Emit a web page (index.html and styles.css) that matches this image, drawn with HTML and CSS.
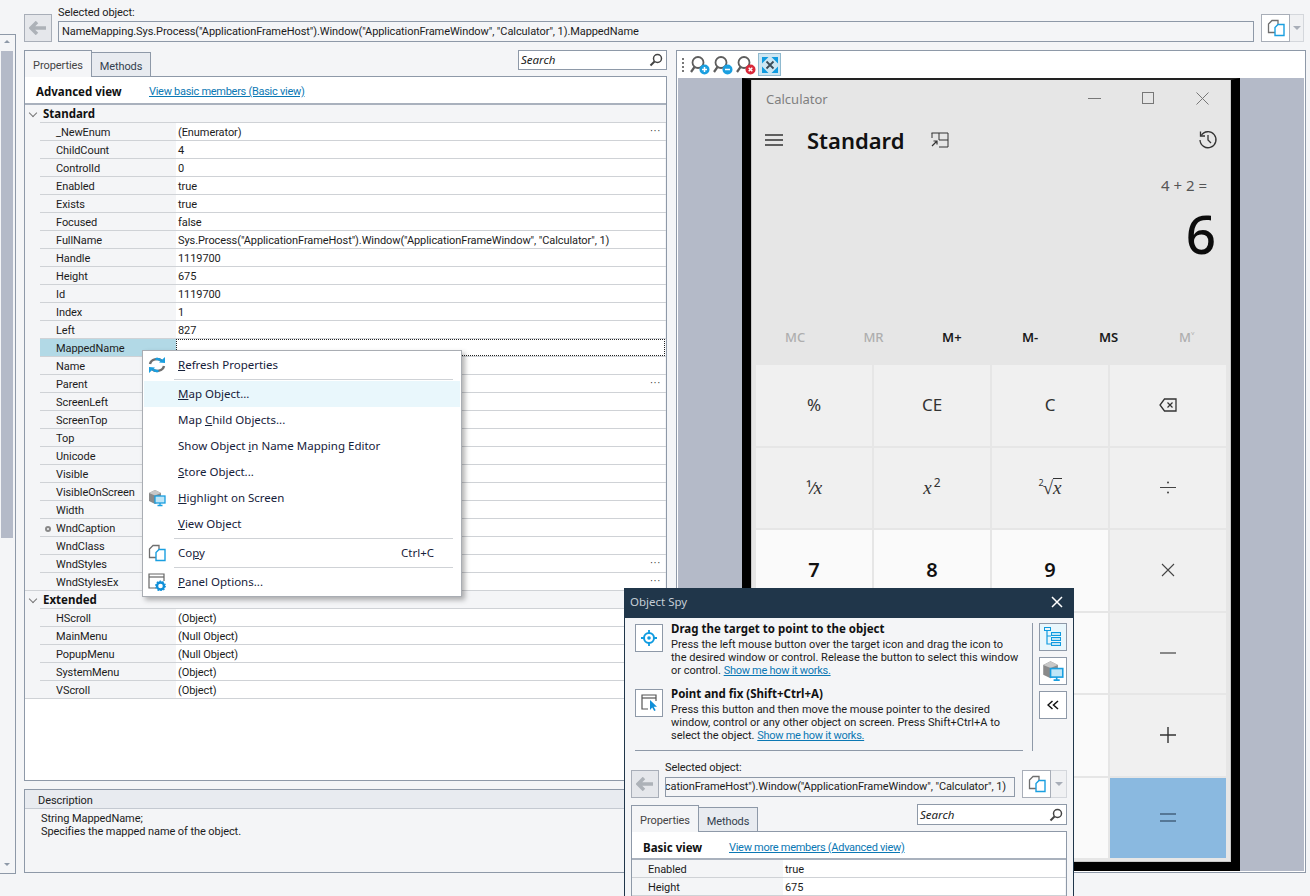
FILE: index.html
```html
<!DOCTYPE html>
<html lang="en">
<head>
    <meta charset="UTF-8">
    <title>Object Browser</title>
    <link rel="stylesheet" href="styles.css">
</head>
<body>
    <svg class="sprites" width="0" height="0">
        <defs>
            <symbol id="i-copy" viewBox="0 0 18 18">
                <path d="M5 1.500h6v12H1.500V5z" fill="#fff" stroke="#6f6f6f" stroke-width="1.300"/>
                <path d="M11 5.500h6v11H8V8.500z" fill="#fff" stroke="#1a9fe0" stroke-width="1.400"/>
            </symbol>
            <symbol id="i-cube" viewBox="0 0 18 18">
                <path d="M1 4l6-3 6 3v8l-6 3-6-3z" fill="#8a8a8a"/>
                <path d="M1 4l6-3 6 3-6 2.500z" fill="#c8c8c8"/>
                <rect x="7" y="7" width="10" height="7" fill="#bfe6f7" stroke="#1a9fe0" stroke-width="1.300"/>
                <path d="M12 14v2M9.500 16.500h5" stroke="#1a9fe0" stroke-width="1.300"/>
            </symbol>
            <symbol id="i-zoom" viewBox="0 0 22 22">
                <circle cx="9" cy="8.500" r="5.500" fill="none" stroke="#5d5d5d" stroke-width="1.800"/>
                <path d="M5.500 13L2 18" stroke="#5d5d5d" stroke-width="2.200"/>
            </symbol>
        </defs>
    </svg>

    <div class="app">
        <div class="rail">
            <span class="rail-arrow up"></span>
            <div class="rail-thumb"></div>
            <span class="rail-arrow down"></span>
        </div>

        <div class="workspace">
            <div class="selbar">
                <button class="back-btn"><svg width="18" height="14" viewBox="0 0 18 14"><path d="M8 1L2 7l6 6M2.500 7H17" fill="none" stroke="#adb2b8" stroke-width="3.500"/></svg></button>
                <div class="sel-col">
                    <div class="sel-label">Selected object:</div>
                    <div class="sel-input"><span>NameMapping.Sys.Process("ApplicationFrameHost").Window("ApplicationFrameWindow", "Calculator", 1).MappedName</span></div>
                </div>
                <button class="copy-btn"><svg width="18" height="18"><use href="#i-copy"/></svg></button>
                <button class="drop-btn"><span class="caret"></span></button>
            </div>

            <div class="panes">
                <div class="left-pane">
                    <div class="tabs">
                        <div class="tab active">Properties</div>
                        <div class="tab">Methods</div>
                        <div class="search"><i>Search</i>
                            <svg width="14" height="14" viewBox="0 0 14 14"><circle cx="8.500" cy="5.500" r="4" fill="none" stroke="#444" stroke-width="1.500"/><path d="M5.500 8.500L1.500 12.500" stroke="#444" stroke-width="2"/></svg>
                        </div>
                    </div>
                    <div class="prop-panel">
                        <div class="view-head"><b>Advanced view</b><a class="link">View basic members (Basic view)</a></div>
                        <div class="prop-group">
                            <div class="group-row"><span class="chev"></span><b>Standard</b></div>
                            <div class="prop-row"><div class="name">_NewEnum</div><div class="val">(Enumerator)<span class="more">···</span></div></div>
                            <div class="prop-row"><div class="name">ChildCount</div><div class="val">4</div></div>
                            <div class="prop-row"><div class="name">ControlId</div><div class="val">0</div></div>
                            <div class="prop-row"><div class="name">Enabled</div><div class="val">true</div></div>
                            <div class="prop-row"><div class="name">Exists</div><div class="val">true</div></div>
                            <div class="prop-row"><div class="name">Focused</div><div class="val">false</div></div>
                            <div class="prop-row"><div class="name">FullName</div><div class="val">Sys.Process("ApplicationFrameHost").Window("ApplicationFrameWindow", "Calculator", 1)</div></div>
                            <div class="prop-row"><div class="name">Handle</div><div class="val">1119700</div></div>
                            <div class="prop-row"><div class="name">Height</div><div class="val">675</div></div>
                            <div class="prop-row"><div class="name">Id</div><div class="val">1119700</div></div>
                            <div class="prop-row"><div class="name">Index</div><div class="val">1</div></div>
                            <div class="prop-row"><div class="name">Left</div><div class="val">827</div></div>
                            <div class="prop-row selected"><div class="name">MappedName</div><div class="val"></div></div>
                            <div class="prop-row"><div class="name">Name</div><div class="val"></div></div>
                            <div class="prop-row"><div class="name">Parent</div><div class="val"><span class="more">···</span></div></div>
                            <div class="prop-row"><div class="name">ScreenLeft</div><div class="val"></div></div>
                            <div class="prop-row"><div class="name">ScreenTop</div><div class="val"></div></div>
                            <div class="prop-row"><div class="name">Top</div><div class="val"></div></div>
                            <div class="prop-row"><div class="name">Unicode</div><div class="val"></div></div>
                            <div class="prop-row"><div class="name">Visible</div><div class="val"></div></div>
                            <div class="prop-row"><div class="name">VisibleOnScreen</div><div class="val"></div></div>
                            <div class="prop-row"><div class="name">Width</div><div class="val"></div></div>
                            <div class="prop-row"><div class="name"><span class="mark"></span>WndCaption</div><div class="val"></div></div>
                            <div class="prop-row"><div class="name">WndClass</div><div class="val"></div></div>
                            <div class="prop-row"><div class="name">WndStyles</div><div class="val"><span class="more">···</span></div></div>
                            <div class="prop-row"><div class="name">WndStylesEx</div><div class="val"><span class="more">···</span></div></div>
                        </div>
                        <div class="prop-group">
                            <div class="group-row"><span class="chev"></span><b>Extended</b></div>
                            <div class="prop-row"><div class="name">HScroll</div><div class="val">(Object)</div></div>
                            <div class="prop-row"><div class="name">MainMenu</div><div class="val">(Null Object)</div></div>
                            <div class="prop-row"><div class="name">PopupMenu</div><div class="val">(Null Object)</div></div>
                            <div class="prop-row"><div class="name">SystemMenu</div><div class="val">(Object)</div></div>
                            <div class="prop-row"><div class="name">VScroll</div><div class="val">(Object)</div></div>
                        </div>
                    </div>
                    <div class="desc-panel">
                        <div class="desc-head">Description</div>
                        <div class="desc-body">String MappedName;<br>Specifies the mapped name of the object.</div>
                    </div>
                </div>

                <div class="right-pane">
                    <div class="viewer-bar">
                        <span class="grip"></span>
                        <span class="zoom-btn">
                            <svg width="22" height="22"><use href="#i-zoom"/><circle cx="15.500" cy="15.500" r="5" fill="#1a9fe0"/><path d="M13 15.500h5M15.500 13v5" stroke="#fff" stroke-width="1.500"/></svg>
                        </span>
                        <span class="zoom-btn">
                            <svg width="22" height="22"><use href="#i-zoom"/><circle cx="15.500" cy="15.500" r="5" fill="#1a9fe0"/><path d="M13 15.500h5" stroke="#fff" stroke-width="1.500"/></svg>
                        </span>
                        <span class="zoom-btn">
                            <svg width="22" height="22"><use href="#i-zoom"/><circle cx="15.500" cy="15.500" r="5" fill="#d9283a"/><path d="M13.700 13.700l3.600 3.600M17.300 13.700l-3.600 3.600" stroke="#fff" stroke-width="1.500"/></svg>
                        </span>
                        <span class="fit-btn">
                            <svg width="18" height="18" viewBox="0 0 18 18"><path d="M1 1h6.500L1 7.500zM17 1v6.500L10.500 1zM1 17v-6.500L7.500 17zM17 17h-6.500l6.500-6.500z" fill="#0f9be0"/><path d="M5.500 5.500l7 7M12.500 5.500l-7 7" stroke="#3c4a55" stroke-width="1.800"/></svg>
                        </span>
                    </div>
                    <div class="viewer">
                        <div class="calc-frame">
                            <div class="calc">
                                <div class="calc-title">
                                    <span class="calc-name">Calculator</span>
                                    <svg width="122" height="14" viewBox="0 0 122 14"><path d="M0 7.500h13" stroke="#777"/><rect x="54.500" y="1.500" width="11" height="11" fill="none" stroke="#777"/><path d="M108.500 1.500l12 12M120.500 1.500l-12 12" stroke="#777"/></svg>
                                </div>
                                <div class="calc-head">
                                    <svg width="18" height="12" viewBox="0 0 18 12"><path d="M0 1h18M0 6h18M0 11h18" stroke="#333" stroke-width="1.500"/></svg>
                                    <span class="calc-mode">Standard</span>
                                    <svg width="18" height="16" viewBox="0 0 18 16"><path d="M.5 1h16.500v14H8M8 1v7h9M1 1v5" fill="none" stroke="#333"/><path d="M1 14l5-5M2.500 9H6v3.500" fill="none" stroke="#333" stroke-width="1.200"/></svg>
                                    <svg class="calc-history" width="20" height="20" viewBox="0 0 20 20"><path d="M3.200 5.500A8 8 0 1 1 2 10" fill="none" stroke="#333" stroke-width="1.300"/><path d="M2.500 1.500v4.500h4.500M10 5v5l3 3" fill="none" stroke="#333" stroke-width="1.300"/></svg>
                                </div>
                                <div class="calc-expr">4 + 2 =</div>
                                <div class="calc-result">6</div>
                                <div class="calc-mem">
                                    <span class="off">MC</span><span class="off">MR</span><span>M+</span><span>M-</span><span>MS</span><span class="off">M˅</span>
                                </div>
                                <div class="keypad">
                                    <div class="key">%</div>
                                    <div class="key">CE</div>
                                    <div class="key">C</div>
                                    <div class="key"><svg width="18" height="14" viewBox="0 0 18 14"><path d="M5.500 1H17v12H5.500L1 7z" fill="none" stroke="#333" stroke-width="1.300"/><path d="M8.500 4.500l5 5M13.500 4.500l-5 5" stroke="#333" stroke-width="1.200"/></svg></div>
                                    <div class="key math"><span class="small-frac">¹⁄</span><i>x</i></div>
                                    <div class="key math"><i>x</i><sup>2</sup></div>
                                    <div class="key math"><sup class="root">2</sup>√<i class="over">x</i></div>
                                    <div class="key"><svg width="16" height="13" viewBox="0 0 16 13"><path d="M0 6.500h16" stroke="#444"/><circle cx="8" cy="1.500" r="1" fill="#444"/><circle cx="8" cy="11.500" r="1" fill="#444"/></svg></div>
                                    <div class="key num">7</div>
                                    <div class="key num">8</div>
                                    <div class="key num">9</div>
                                    <div class="key"><svg width="14" height="14" viewBox="0 0 14 14"><path d="M1 1l12 12M13 1L1 13" stroke="#444" stroke-width="1.100"/></svg></div>
                                    <div class="key num"></div>
                                    <div class="key num"></div>
                                    <div class="key num"></div>
                                    <div class="key"><svg width="16" height="2" viewBox="0 0 16 2"><path d="M0 1h16" stroke="#444" stroke-width="1.200"/></svg></div>
                                    <div class="key num"></div>
                                    <div class="key num"></div>
                                    <div class="key num"></div>
                                    <div class="key"><svg width="16" height="16" viewBox="0 0 16 16"><path d="M0 8h16M8 0v16" stroke="#333" stroke-width="1.400"/></svg></div>
                                    <div class="key num"></div>
                                    <div class="key num"></div>
                                    <div class="key num"></div>
                                    <div class="key equals"><svg width="16" height="9" viewBox="0 0 16 9"><path d="M0 1h16M0 8h16" stroke="#44627e" stroke-width="1.700"/></svg></div>
                                </div>
                            </div>
                        </div>
                    </div>
                </div>
            </div>
        </div>
    </div>

    <div class="menu">
        <div class="menu-item"><span class="slot"><svg width="18" height="18" viewBox="0 0 18 18"><path d="M2 8a7 6 0 0 1 12-3" fill="none" stroke="#6f6f6f" stroke-width="2.400"/><path d="M16 10a7 6 0 0 1-12 3" fill="none" stroke="#6f6f6f" stroke-width="2.400"/><path d="M11 6.500l6 .5V1zM7 11.500l-6-.5v6z" fill="#1a9fe0"/><path d="M7.500 3.200a6 6 0 0 1 5.500 1.500M10.500 14.800a6 6 0 0 1-5.500-1.500" fill="none" stroke="#1a9fe0" stroke-width="2.400"/></svg></span><span><u>R</u>efresh Properties</span></div>
        <div class="menu-sep"></div>
        <div class="menu-item hover"><span class="slot"></span><span><u>M</u>ap Object...</span></div>
        <div class="menu-item"><span class="slot"></span><span>Map <u>C</u>hild Objects...</span></div>
        <div class="menu-item"><span class="slot"></span><span>Show Object <u>i</u>n Name Mapping Editor</span></div>
        <div class="menu-item"><span class="slot"></span><span><u>S</u>tore Object...</span></div>
        <div class="menu-item"><span class="slot"><svg width="18" height="18"><use href="#i-cube"/></svg></span><span><u>H</u>ighlight on Screen</span></div>
        <div class="menu-item"><span class="slot"></span><span><u>V</u>iew Object</span></div>
        <div class="menu-sep"></div>
        <div class="menu-item"><span class="slot"><svg width="18" height="18"><use href="#i-copy"/></svg></span><span>Co<u>p</u>y</span><span class="shortcut">Ctrl+C</span></div>
        <div class="menu-sep"></div>
        <div class="menu-item"><span class="slot"><svg width="18" height="18" viewBox="0 0 18 18"><path d="M8 15H1V1h15v7" fill="none" stroke="#666" stroke-width="1.200"/><path d="M1 4h15" stroke="#666" stroke-width="1.200"/><circle cx="12.500" cy="13" r="3.500" fill="none" stroke="#0f8fd8" stroke-width="2.400"/><circle cx="12.500" cy="13" r="4.800" fill="none" stroke="#0f8fd8" stroke-width="1.200" stroke-dasharray="1.500 1.500"/></svg></span><span><u>P</u>anel Options...</span></div>
    </div>

    <div class="spy">
        <div class="spy-title"><span>Object Spy</span>
            <svg width="12" height="12" viewBox="0 0 12 12"><path d="M1 1l10 10M11 1L1 11" stroke="#fff" stroke-width="1.500"/></svg>
        </div>
        <div class="spy-top">
            <div class="spy-help">
                <div class="hint">
                    <div class="hint-btn"><svg width="16" height="16" viewBox="0 0 16 16"><circle cx="8" cy="8" r="5" fill="none" stroke="#0f9be0" stroke-width="2"/><circle cx="8" cy="8" r="1.800" fill="#0f9be0"/><path d="M8 0v3M8 13v3M0 8h3M13 8h3" stroke="#0f9be0" stroke-width="1.800"/></svg></div>
                    <div class="hint-text">
                        <b>Drag the target to point to the object</b>
                        <p>Press the left mouse button over the target icon and drag the icon to<br>the desired window or control. Release the button to select this window<br>or control. <a class="link">Show me how it works.</a></p>
                    </div>
                </div>
                <div class="hint">
                    <div class="hint-btn"><svg width="16" height="18" viewBox="0 0 16 18"><path d="M7 15H1V1h14v6" fill="none" stroke="#555" stroke-width="1.200"/><path d="M1 4h14" stroke="#555" stroke-width="1.200"/><path d="M9 6v10l2.200-2.400 2 3.400 1.500-.8-2-3.400H16z" fill="#0f8fd8"/></svg></div>
                    <div class="hint-text">
                        <b>Point and fix (Shift+Ctrl+A)</b>
                        <p>Press this button and then move the mouse pointer to the desired<br>window, control or any other object on screen. Press Shift+Ctrl+A to<br>select the object. <a class="link">Show me how it works.</a></p>
                    </div>
                </div>
            </div>
            <div class="spy-side">
                <div class="side-btn on"><svg width="18" height="20" viewBox="0 0 18 20"><path d="M3 4v13h4M3 9h4" fill="none" stroke="#0f9be0" stroke-width="1.200"/><rect x=".5" y=".5" width="6" height="3" fill="none" stroke="#0f9be0"/><rect x="7.500" y="5.500" width="9" height="3" fill="#bfe6f7" stroke="#0f9be0"/><rect x="7.500" y="10.500" width="9" height="3" fill="#bfe6f7" stroke="#0f9be0"/><rect x="7.500" y="15.500" width="9" height="3" fill="#bfe6f7" stroke="#0f9be0"/></svg></div>
                <div class="side-btn"><svg width="22" height="22"><use href="#i-cube"/></svg></div>
                <div class="side-btn"><svg width="12" height="10" viewBox="0 0 12 10"><path d="M5.500 1L1 5l4.500 4M11 1L6.500 5l4.500 4" fill="none" stroke="#111" stroke-width="1.500"/></svg></div>
            </div>
        </div>
        <div class="spy-main">
            <div class="spy-rule"></div>
            <div class="selbar spy-selbar">
                <button class="back-btn"><svg width="18" height="14" viewBox="0 0 18 14"><path d="M8 1L2 7l6 6M2.500 7H17" fill="none" stroke="#adb2b8" stroke-width="3.500"/></svg></button>
                <div class="sel-col">
                    <div class="sel-label">Selected object:</div>
                    <div class="sel-input clip"><span>NameMapping.Sys.Process("ApplicationFrameHost").Window("ApplicationFrameWindow", "Calculator", 1)</span></div>
                </div>
                <button class="copy-btn"><svg width="18" height="18"><use href="#i-copy"/></svg></button>
                <button class="drop-btn"><span class="caret"></span></button>
            </div>
            <div class="tabs spy-tabs">
                <div class="tab active">Properties</div>
                <div class="tab">Methods</div>
                <div class="search"><i>Search</i>
                    <svg width="14" height="14" viewBox="0 0 14 14"><circle cx="8.500" cy="5.500" r="4" fill="none" stroke="#444" stroke-width="1.500"/><path d="M5.500 8.500L1.500 12.500" stroke="#444" stroke-width="2"/></svg>
                </div>
            </div>
            <div class="prop-panel spy-panel">
                <div class="view-head"><b>Basic view</b><a class="link">View more members (Advanced view)</a></div>
                <div class="prop-row"><div class="name">Enabled</div><div class="val">true</div></div>
                <div class="prop-row"><div class="name">Height</div><div class="val">675</div></div>
            </div>
        </div>
    </div>
</body>
</html>
```

FILE: styles.css
```css
* {
    box-sizing: border-box;
}

body {
    margin: 0;
    height: 896px;
    overflow: hidden;
    position: relative;
    background: #f4f5f7;
    color: #1c1c1c;
    font-family: Roboto, "Noto Sans", sans-serif;
    font-size: 11px;
    letter-spacing: -0.08px;
    line-height: 16px;
}

b {
    font-family: "Noto Sans", sans-serif;
    font-size: 11.5px;
    font-weight: 700;
    letter-spacing: 0;
    color: #111;
}

button {
    padding: 0;
    display: flex;
    align-items: center;
    justify-content: center;
}

.sprites {
    position: absolute;
}

.link {
    color: #0b78b4;
    text-decoration: underline;
    letter-spacing: -0.28px;
}

.app {
    display: flex;
    height: 896px;
}

/* left scroll strip */
.rail {
    width: 16px;
    height: 840px;
    margin-top: 34px;
    margin-right: 8px;
    padding: 5px 2px 5px 1px;
    display: flex;
    flex-direction: column;
    align-items: center;
    border: 1px solid #8e99a8;
    border-left: 0;
}

.rail-arrow {
    width: 0;
    height: 0;
    border-left: 3px solid transparent;
    border-right: 3px solid transparent;
}

.rail-arrow.up {
    border-bottom: 3px solid #8e99a8;
    margin-bottom: 8px;
}

.rail-arrow.down {
    border-top: 3px solid #8e99a8;
    margin-top: auto;
    margin-bottom: 2px;
}

.rail-thumb {
    width: 12px;
    height: 487px;
    background: #b4bac8;
}

.workspace {
    width: 1282px;
}

/* selected object bar */
.selbar {
    display: flex;
    align-items: flex-start;
    padding-top: 14px;
}

.back-btn {
    width: 28px;
    height: 28px;
    background: #e5e7eb;
    border: 1px solid #a8aeb8;
}

.sel-col {
    width: 1196px;
    margin-left: 6px;
    margin-right: 7px;
    margin-top: -10px;
}

.sel-label {
    height: 17px;
    padding-top: 1px;
    color: #222;
}

.sel-input {
    height: 21px;
    padding: 2px 3px 0;
    border: 1px solid #8e99a8;
    white-space: nowrap;
    overflow: hidden;
}

.sel-input.clip {
    height: 20px;
    padding-top: 1px;
    display: flex;
    justify-content: flex-end;
    padding-right: 8px;
}

.sel-input.clip span {
    flex-shrink: 0;
}

.copy-btn {
    width: 29px;
    height: 28px;
    background: #fff;
    border: 1px solid #a8aeb8;
}

.drop-btn {
    width: 14px;
    height: 28px;
    background: #f0f1f3;
    border: 1px solid #d4d7dc;
    border-left: 0;
}

.caret {
    width: 0;
    height: 0;
    border-left: 4px solid transparent;
    border-right: 4px solid transparent;
    border-top: 4px solid #a8aeb8;
}

.panes {
    display: flex;
    gap: 9px;
    margin-top: 8px;
}

/* left pane */
.left-pane {
    width: 643px;
}

.tabs {
    display: flex;
    align-items: flex-end;
    height: 26px;
}

.tab {
    height: 24px;
    width: 59px;
    padding-top: 6px;
    text-align: center;
    color: #33404e;
    background: #e8ebf0;
    border: 1px solid #8e99a8;
    border-bottom: 0;
    border-left: 0;
}

.tab.active {
    height: 27px;
    width: 68px;
    margin-bottom: -1px;
    padding-top: 7px;
    background: #f4f5f7;
    border-left: 1px solid #8e99a8;
    position: relative;
    color: #444;
}

.search {
    margin-left: auto;
    margin-bottom: 6px;
    width: 149px;
    height: 20px;
    display: flex;
    align-items: center;
    justify-content: space-between;
    padding: 0 3px 0 2px;
    background: #fff;
    border: 1px solid #8e99a8;
}

.search i {
    font-family: "Noto Sans", sans-serif;
    font-size: 11.5px;
    letter-spacing: 0;
}

.prop-panel {
    height: 705px;
    background: #fff;
    border: 1px solid #8e99a8;
}

.view-head {
    height: 28px;
    padding-top: 2px;
    display: flex;
    align-items: center;
    border-bottom: 2px solid #a9b1bd;
}

.view-head b {
    width: 124px;
    margin-top: 1px;
    padding-left: 11px;
}

.view-head .link {
    margin-top: 2px;
}

.prop-group {
    background: #f4f5f7;
    border-bottom: 1px solid #cfd2d6;
}

.group-row {
    height: 18px;
    padding-left: 2px;
    display: flex;
    align-items: center;
    background-image: linear-gradient(#cfd2d6, #cfd2d6);
    background-repeat: no-repeat;
    background-position: 15px bottom;
    background-size: 100% 1px;
}

.group-row b {
    margin-left: 5px;
}

.chev {
    width: 6px;
    height: 6px;
    margin: -3px 2px 0 3px;
    border-right: 1px solid #777;
    border-bottom: 1px solid #777;
    transform: rotate(45deg);
}

.prop-row {
    height: 18px;
    margin-left: 15px;
    display: flex;
    border-bottom: 1px solid #cfd2d6;
}

.prop-group .prop-row:last-child {
    height: 17px;
    border-bottom: 0;
}

.name {
    width: 136px;
    padding-top: 2px;
    padding-left: 16px;
    white-space: nowrap;
}

.val {
    flex: 1;
    padding-top: 2px;
    padding-left: 2px;
    margin-right: 1px;
    display: flex;
    justify-content: space-between;
    background: #fff;
    white-space: nowrap;
}

.more {
    margin-left: auto;
    padding-right: 4px;
    font-size: 10px;
    letter-spacing: 1px;
    line-height: 14px;
}

.mark {
    display: inline-block;
    width: 6px;
    height: 6px;
    margin-left: -11px;
    margin-right: 5px;
    border: 2px solid #888;
    border-radius: 50%;
}

.prop-row.selected .name {
    background: #b2d9e6;
}

.prop-row.selected .val {
    border: 1px dotted #222;
}

.desc-panel {
    height: 84px;
    margin-top: 8px;
    border: 1px solid #8e99a8;
}

.desc-head {
    height: 19px;
    padding-left: 13px;
    padding-top: 3px;
    background: #e8ebf0;
    border-bottom: 1px solid #c4c9d1;
    color: #222;
}

.desc-body {
    padding: 3px 16px;
    line-height: 13px;
}

/* right pane */
.right-pane {
    width: 630px;
    height: 823px;
    background: #fff;
    border: 1px solid #8e99a8;
    padding: 0 1px 1px;
    display: flex;
    flex-direction: column;
}

.viewer-bar {
    height: 27px;
    display: flex;
    align-items: center;
    flex-shrink: 0;
    padding-left: 4px;
}

.grip {
    width: 2px;
    height: 14px;
    margin-right: 5px;
    background: repeating-linear-gradient(#777 0 2px, transparent 2px 4px);
}

.zoom-btn {
    width: 23px;
    height: 22px;
}

.fit-btn {
    width: 23px;
    height: 23px;
    display: flex;
    align-items: center;
    justify-content: center;
    background: #cde6f2;
    border: 1px solid #8fb9cf;
}

.viewer {
    flex: 1;
    display: flex;
    padding-left: 64px;
    background: #b4bac8;
}

.calc-frame {
    width: 498px;
    border-style: solid;
    border-color: #000;
    border-width: 2px 9px 9px 9px;
    border-top-color: #222;
}

.calc {
    height: 100%;
    display: flex;
    flex-direction: column;
    background: #e6e6e6;
    border: 1px solid #c8c8c8;
    border-top: 0;
    padding-bottom: 3px;
    color: #1a1a1a;
    font-family: "Noto Sans", sans-serif;
    letter-spacing: 0;
}

.calc-title {
    height: 38px;
    flex-shrink: 0;
    display: flex;
    align-items: center;
    padding-left: 14px;
    padding-right: 20px;
    justify-content: space-between;
}

.calc-title svg {
    margin-top: -2px;
}

.calc-name {
    color: #7f7f7f;
    font-size: 13px;
}

.calc-head {
    height: 44px;
    flex-shrink: 0;
    display: flex;
    align-items: center;
    padding-left: 13px;
    padding-right: 12px;
}

.calc-mode {
    width: 124px;
    margin-left: 24px;
    font-size: 22px;
    font-weight: 600;
    line-height: 28px;
    color: #111;
}

.calc-history {
    margin-left: auto;
}

.calc-expr {
    padding-right: 23px;
    margin-top: 13px;
    height: 20px;
    text-align: right;
    font-size: 15px;
    line-height: 20px;
    color: #555;
}

.calc-result {
    padding-right: 14px;
    margin-top: 9px;
    height: 60px;
    text-align: right;
    font-size: 53px;
    font-weight: 500;
    line-height: 60px;
    color: #0c0c0c;
}

.calc-mem {
    margin-top: 62px;
    height: 22px;
    padding: 0 4px;
    display: grid;
    grid-template-columns: repeat(6, 1fr);
    text-align: center;
    font-size: 13px;
    font-weight: 600;
    line-height: 22px;
}

.calc-mem .off {
    color: #aeaeae;
    font-weight: 500;
}

.keypad {
    margin: 17px 4px 0;
    flex: 1;
    display: grid;
    grid-template-columns: repeat(4, 1fr);
    grid-template-rows: repeat(6, 1fr);
    gap: 2px;
}

.key {
    display: flex;
    align-items: center;
    justify-content: center;
    background: #f0f0f0;
    font-size: 17px;
    color: #333;
}

.key.num {
    background: #fafafa;
    font-size: 20px;
    font-weight: 600;
    color: #111;
}

.key.equals {
    background: #8ab9e0;
}

.key.math {
    font-family: "Liberation Serif", serif;
    font-size: 19px;
}

.key.math sup {
    font-size: 12px;
    font-family: "Noto Sans", sans-serif;
    margin-left: 2px;
    margin-top: -10px;
}

.key.math sup.root {
    font-size: 9px;
    margin-left: 0;
    margin-right: -1px;
}

.over {
    border-top: 1px solid #333;
    line-height: 18px;
}

.small-frac {
    font-size: 16px;
    font-family: "Noto Sans", sans-serif;
}

/* context menu */
.menu {
    position: absolute;
    left: 142px;
    top: 350px;
    width: 320px;
    height: 247px;
    padding: 1px;
    background: #fff;
    border: 1px solid #a9adb3;
    box-shadow: 3px 3px 5px rgba(0, 0, 0, 0.3);
    font-family: "Noto Sans", sans-serif;
    font-size: 11.5px;
    letter-spacing: 0;
}

.menu-item {
    height: 26px;
    display: flex;
    align-items: center;
    color: #16213a;
}

.menu-item.hover {
    background: #e9f7fc;
}

.slot {
    width: 34px;
    padding-left: 4px;
    flex-shrink: 0;
    display: flex;
    align-items: center;
}

.shortcut {
    margin-left: auto;
    padding-right: 26px;
}

.menu-sep {
    height: 3px;
    margin-left: 30px;
    margin-right: 7px;
    padding-top: 1px;
}

.menu-sep::before {
    content: "";
    display: block;
    height: 1px;
    background: #cfd2d6;
}

/* object spy window */
.spy {
    position: absolute;
    left: 624px;
    top: 588px;
    width: 450px;
    height: 308px;
    overflow: hidden;
    background: #f4f5f7;
    border-left: 1px solid #20364a;
    border-right: 1px solid #20364a;
}

.spy-title {
    height: 30px;
    margin: 0 -1px;
    padding: 0 11px 2px 6px;
    display: flex;
    align-items: center;
    justify-content: space-between;
    background: #20364a;
    color: #c5cdd6;
    font-family: "Noto Sans", sans-serif;
    font-size: 11.5px;
    letter-spacing: 0;
}

.spy-top {
    display: flex;
    padding: 5px 6px 0 10px;
    height: 133px;
}

.spy-help {
    width: 398px;
    border-right: 1px solid #8e99a8;
    padding-right: 4px;
}

.hint {
    display: flex;
    height: 65px;
}

.hint-btn {
    width: 28px;
    height: 28px;
    margin-top: 1px;
    flex-shrink: 0;
    display: flex;
    align-items: center;
    justify-content: center;
    background: #fff;
    border: 1px solid #8e99a8;
}

.hint-text {
    margin-left: 8px;
    margin-top: -1px;
    line-height: 13px;
    letter-spacing: 0;
}

.hint-text p {
    margin: 2px 0 0;
    white-space: nowrap;
}

.spy-side {
    margin-left: 6px;
    display: flex;
    flex-direction: column;
    gap: 6px;
}

.side-btn {
    width: 28px;
    height: 28px;
    display: flex;
    align-items: center;
    justify-content: center;
    background: #fff;
    border: 1px solid #8e99a8;
}

.side-btn.on {
    background: #e9f7fc;
}

.spy-main {
    padding: 0 6px;
}

.spy-rule {
    height: 1px;
    margin: -1px 44px 0 4px;
    background: #8e99a8;
}

.spy-selbar {
    padding-top: 19px;
}

.spy-selbar .sel-col {
    width: 350px;
    margin-top: -11px;
}

.spy-selbar .sel-label {
    height: 18px;
}

.spy-selbar .copy-btn {
    width: 29px;
}

.spy-selbar .drop-btn {
    width: 16px;
}

.spy-tabs {
    margin-top: 7px;
}

.spy-tabs .search {
    width: 150px;
    height: 21px;
    margin-bottom: 6px;
}

.spy-panel {
    height: 66px;
}

.spy-panel .view-head {
    padding-top: 4px;
}

.spy-panel .prop-row {
    margin-left: 0;
    background: #f4f5f7;
}

.spy-panel .name {
    width: 151px;
}

.spy-panel .view-head b {
    width: 97px;
}
```
